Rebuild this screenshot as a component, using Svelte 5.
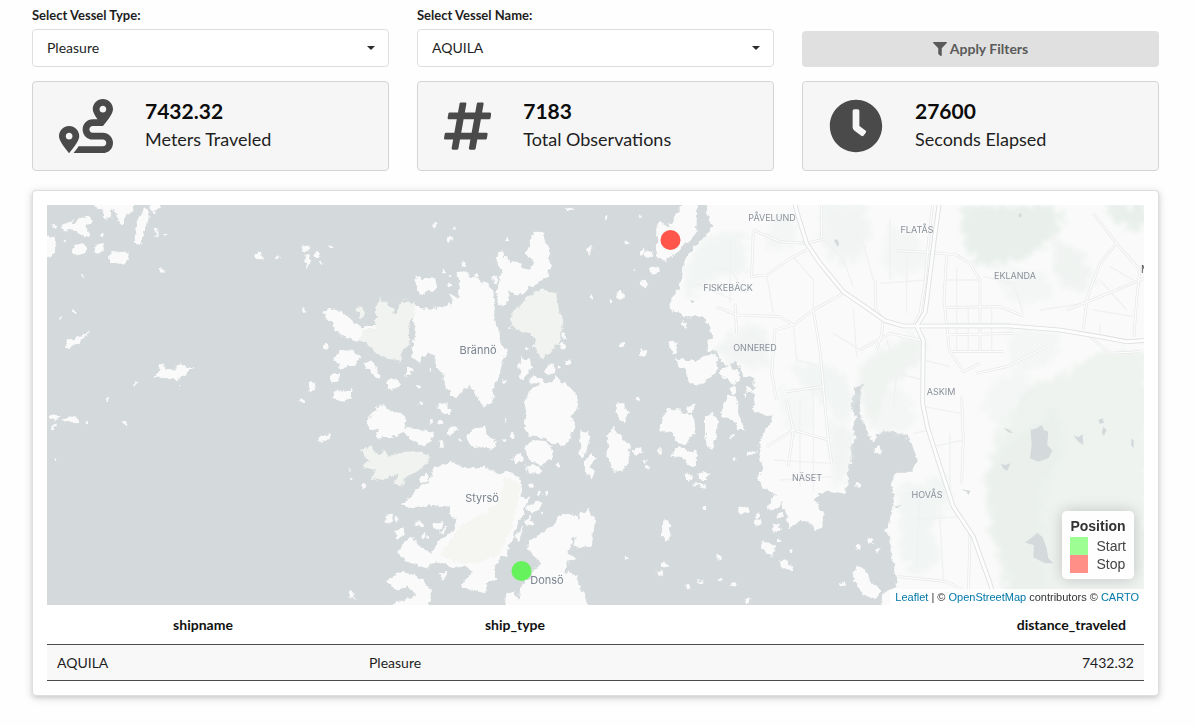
<script>
  const vesselTypes = ['Pleasure', 'Cargo', 'Tanker', 'Tug', 'Fishing'];
  const vesselNames = ['AQUILA', 'BALTICO', 'VICTORIA'];
  let vesselType = $state('Pleasure');
  let vesselName = $state('AQUILA');

  const stats = [
    {
      value: '7432.32',
      label: 'Meters Traveled',
      width: 512,
      path: 'M416 320h-96c-17.600 0-32-14.400-32-32s14.400-32 32-32h96s96-107 96-160-43-96-96-96-96 43-96 96c0 25.500 22.200 63.400 45.300 96H320c-52.900 0-96 43.100-96 96s43.100 96 96 96h96c17.600 0 32 14.400 32 32s-14.400 32-32 32H185.500c-16 24.800-33.800 47.700-47.300 64H416c52.900 0 96-43.100 96-96s-43.100-96-96-96zm0-256c17.700 0 32 14.300 32 32s-14.300 32-32 32-32-14.300-32-32 14.300-32 32-32zM96 256c-53 0-96 43-96 96s96 160 96 160 96-107 96-160-43-96-96-96zm0 128c-17.700 0-32-14.300-32-32s14.300-32 32-32 32 14.300 32 32-14.300 32-32 32z'
    },
    {
      value: '7183',
      label: 'Total Observations',
      width: 448,
      path: 'M440.667 182.109l7.143-40c1.313-7.355-4.342-14.109-11.813-14.109h-74.810l14.623-81.891C377.123 38.754 371.468 32 363.997 32h-40.632a12 12 0 0 0-11.813 9.891L296.175 128H197.540l14.623-81.891C213.477 38.754 207.822 32 200.350 32h-40.632a12 12 0 0 0-11.813 9.891L132.528 128H53.432a12 12 0 0 0-11.813 9.891l-7.143 40C33.163 185.246 38.818 192 46.289 192h74.810L98.242 320H19.146a12 12 0 0 0-11.813 9.891l-7.143 40C-1.123 377.246 4.532 384 12.003 384h74.810L72.190 465.891C70.877 473.246 76.532 480 84.003 480h40.632a12 12 0 0 0 11.813-9.891L151.826 384h98.634l-14.623 81.891C234.523 473.246 240.178 480 247.650 480h40.632a12 12 0 0 0 11.813-9.891L315.472 384h79.096a12 12 0 0 0 11.813-9.891l7.143-40c1.313-7.355-4.342-14.109-11.813-14.109h-74.810l22.857-128h79.096a12 12 0 0 0 11.813-9.891zM261.889 320h-98.634l22.857-128h98.634l-22.857 128z'
    },
    {
      value: '27600',
      label: 'Seconds Elapsed',
      width: 512,
      path: 'M256 8C119 8 8 119 8 256s111 248 248 248 248-111 248-248S393 8 256 8zm92.490 313l-20 25a16 16 0 0 1-22.490 2.500l-67-49.720a40 40 0 0 1-15-31.230V112a16 16 0 0 1 16-16h32a16 16 0 0 1 16 16V256l58 42.500A16 16 0 0 1 348.490 321z'
    }
  ];

  const rows = [{ shipname: 'AQUILA', ship_type: 'Pleasure', distance_traveled: '7432.32' }];

  // Each sheet holds shapes at three units per map pixel, from its own origin.
  const sheets = [
    {
      x: 30,
      y: 185,
      shapes: [
        '190,40 195,65 215,72 225,102 248,95 240,78 258,76 268,115 278,120 285,92 310,78 315,40',
        '360,40 362,70 372,85 388,65 390,40',
        '90,128 105,110 130,105 132,118 150,98 178,95 182,115 165,120 178,150 160,156 140,138 110,136',
        '342,70 358,82 352,120 340,145 338,175 322,183 311,170 316,145 325,100',
        '374,122 382,128 383,155 375,155',
        '40,155 72,155 78,165 75,195 62,215 40,218',
        '125,188 148,173 170,190 165,205 130,208',
        '190,200 200,180 215,178 222,200 205,206',
        '240,198 292,202 294,234 242,238',
        '388,248 400,252 405,260 395,266 386,260',
        '670,212 685,198 700,220 680,226',
        '102,486 115,465 150,455 180,438 165,460 140,478 118,486',
        '368,578 385,562 385,540 408,535 405,552 430,560 450,532 462,548 495,545 470,565 450,580 420,585 395,572',
        '312,590 326,594 315,603', '60,690 88,690 85,700 60,706', '98,700 120,693 142,698 138,711 102,712',
        '60,728 75,715 82,722 64,738', '862,770 875,752 898,745 900,762', '880,378 900,370 915,390 900,405 885,398'
      ],
      dots: [[72,126,5],[215,148,5],[406,150,3],[104,172,4],[155,276,4],[744,220,5],[826,188,5],[833,216,7],[832,242,5],[860,212,6],[874,232,4],[135,382,5],[88,398,4],[824,378,5],[234,645,5],[284,711,6],[168,713,4],[845,608,8],[816,645,6],[445,602,4],[78,825,4],[887,485,5]]
    },
    {
      x: 300,
      y: 200,
      shapes: [
        '470,222 485,214 505,222 530,240 565,252 580,275 585,305 583,350 598,395 604,430 625,455 608,485 600,520 588,545 578,585 555,618 540,600 525,580 510,560 490,568 478,592 450,578 432,552 430,520 412,510 400,465 380,458 365,485 345,484 334,472 340,420 345,385 340,340 345,315 372,325 390,333 415,320 440,322 455,300 445,285 475,290 480,265',
        '347,228 365,240 380,235 405,235 412,260 395,275 380,272 370,285 348,272',
        '595,155 610,155 625,185 660,190 670,205 690,210 700,190 680,160 690,120 705,98 730,98 740,135 752,155 745,175 755,200 745,225 720,240 705,262 685,255 665,288 630,275 622,300 610,318 594,315 592,270 605,215 590,185',
        '655,500 665,470 690,480 694,505 670,540 660,525',
        '685,540 705,530 730,540 728,552 695,550',
        '680,600 705,575 745,578 765,525 785,545 810,565 830,590 828,630 800,650 680,640 675,615',
        '70,335 95,325 125,340 150,355 165,370 188,385 228,375 228,388 195,390 175,425 145,415 120,405 105,385 95,360',
        '100,475 120,450 160,452 185,475 160,495 125,508', '190,485 215,485 240,520 235,542 210,520',
        '315,525 325,500 345,508 330,528', '95,595 115,565 135,575 160,560 150,595 130,605',
        '410,612 440,610 455,635 425,640', '735,515 755,490 768,510 755,528',
        '795,28 815,22 822,28 802,34', '858,144 876,142 868,165', '480,188 495,186 498,198 485,200',
        '580,230 593,225 593,250 582,248', '630,380 625,390 640,385', '225,625 240,615 275,640 225,640'
      ],
      dots: [[403,77,7],[448,116,8],[461,85,4],[624,118,5],[528,229,6],[448,252,6],[18,145,7],[24,183,9],[50,168,6],[90,137,4],[430,212,5],[450,230,4],[682,445,7],[705,438,5],[792,410,6],[785,437,10],[875,292,5],[35,555,10],[105,535,14],[280,550,18],[270,325,8],[80,440,8],[355,560,5],[615,545,5],[805,488,6],[780,500,5],[390,510,5],[8,600,6],[362,612,5]]
    },
    {
      x: 340,
      y: 390,
      shapes: [
        '80,90 105,60 128,45 145,60 185,70 200,90 190,110 240,115 275,130 275,150 245,168 210,145 190,125 160,140 130,145 110,140 115,120 85,115',
        '378,140 400,115 432,112 450,145 470,150 455,180 430,168 400,175',
        '290,40 310,38 335,60 330,78 312,75', '315,130 330,108 352,105 350,120 328,138',
        '400,-15 430,0 465,15 455,35 430,50 420,25', '330,-5 365,0 350,20',
        '555,30 575,0 600,-20 680,-20 715,20 708,60 690,80 705,100 700,125 670,168 640,160 600,140 570,140 552,115 560,75',
        '555,175 570,155 600,150 638,170 634,205 605,225 565,210',
        '515,205 545,190 550,215 525,215', '555,230 575,220 608,235 600,252 570,250',
        '180,345 215,320 235,295 265,275 285,230 330,215 375,235 430,230 480,250 500,240 545,270 545,320 570,325 555,350 550,375 530,400 525,445 505,465 500,500 480,505 465,535 465,570 440,580 435,610 400,600 360,590 375,570 400,545 380,530 330,530 300,515 275,520 260,535 200,515 175,490 185,465 215,440 235,465 270,490 295,460 340,415 350,390 330,370 330,350 280,345 220,355',
        '565,455 600,435 640,405 665,375 700,370 720,395 745,355 765,385 755,465 725,470 700,440 685,490 710,510 680,515 670,545 690,545 710,560 730,610 745,665 490,665 500,610 520,600 535,630 545,580 575,560 600,520 570,490',
        '135,575 180,545 225,555 270,590 275,630 250,665 140,665 160,640 205,625 230,610 200,590 170,600',
        '560,350 600,330 605,345 575,370', '555,390 570,380 578,400 565,415', '530,440 545,405 547,420 535,455',
        '720,175 732,125 748,125 745,165 730,205 718,195', '735,220 750,195 765,200 745,240 765,260 735,250',
        '825,45 850,55 860,85 845,95 830,70', '803,135 820,115 850,150 870,165 868,205 850,240 825,245 805,205',
        '165,420 190,415 195,430 175,450', '225,395 245,390 248,408 228,408', '280,400 305,392 310,410 285,420',
        '295,550 325,545 310,572', '300,425 325,405 310,435', '240,265 262,250 265,270 245,282', '135,400 140,380 160,372 155,400'
      ],
      dots: [[300,98,7],[270,95,6],[240,40,5],[304,165,7],[362,150,4],[515,138,6],[495,150,4],[496,88,3],[572,285,7],[620,313,5],[35,265,5],[28,240,4],[72,288,6],[35,612,9],[45,624,4],[170,385,6],[855,508,4],[653,228,5],[600,310,6],[250,437,6],[265,442,4],[605,370,4]]
    },
    {
      x: 580,
      y: 200,
      shapes: [
        '380,-10 378,50 397,75 388,98 365,118 345,140 325,165 312,195 305,240 295,270 280,290 270,310 275,332 300,340 312,355 350,345 378,358 392,385 385,395 400,412 382,425 384,450 410,455 425,485 440,498 470,485 490,528 522,530 524,560 532,600 515,625 525,638 560,645 580,640 575,665 560,690 540,720 538,780 552,810 530,835 548,865 570,872 585,882 560,925 575,935 597,925 605,905 625,970 625,985 660,962 690,965 708,992 728,980 728,935 705,900 718,880 750,872 795,882 806,850 800,830 810,790 815,740 830,715 818,680 830,650 812,618 828,560 850,550 838,610 845,660 862,700 880,725 898,698 940,692 980,710 1005,750 1010,785 995,815 950,815 935,840 942,910 925,980 915,985 930,1010 935,1070 950,1130 955,1160 915,1175 900,1230 1720,1230 1720,-10',
        '290,45 310,10 350,-10 352,60 345,100 310,140 280,170 250,180 228,165 232,120 228,95 240,65 260,80',
        '265,425 292,425 288,460 275,460', '290,475 315,480 350,480 385,462 410,470 415,505 395,530 350,558 325,540 315,510 295,495',
        '418,515 445,495 475,515 480,540 460,558 440,540', '205,205 240,200 240,215 215,225', '305,360 325,380 318,388 305,375',
        '108,275 128,272 132,290 118,300', '18,145 35,145 27,165', '110,610 128,610 150,640 110,640', '250,640 290,625 310,640', '440,620 455,590 472,600 475,640'
      ],
      dots: [[188,155,8],[206,165,11],[141,130,7],[190,250,9],[128,433,8],[90,305,4],[36,293,4],[190,460,9],[80,53,5],[178,48,4],[458,570,7],[505,570,8],[520,575,6],[345,90,5],[495,588,4],[172,596,4],[160,212,3]]
    },
    {
      x: 580,
      y: 390,
      shapes: [
        '105,38 125,48 142,78 132,95 115,80', '85,150 98,112 118,140 145,160 150,205 125,245 95,235 82,205',
        '235,115 260,55 300,70 340,75 348,130 325,150 318,165 295,160 275,125 255,130',
        '275,200 290,168 330,185 352,185 350,225 330,235 305,205', '375,75 402,65 412,85 408,125 400,180 382,175 375,135',
        '420,65 445,20 465,18 475,40 475,75 495,120 475,120 465,95 435,85', '155,180 170,172 190,185 170,195',
        '315,255 325,245 338,255 330,272 315,268', '355,255 370,240 388,250 380,270 360,270', '335,290 355,275 380,290 380,298 350,285',
        '250,395 265,390 275,435 255,455 245,430', '470,355 500,350 510,365 480,375', '540,465 555,450 585,470 580,495 560,490',
        '595,515 620,510 640,528 635,545 605,530', '818,565 830,528 855,535 875,575 900,600 885,625 850,615 835,590',
        '228,540 250,548 245,560', '245,520 260,515 268,528 252,534', '0,365 28,365 45,395 35,470 -20,470',
        '500,195 515,178 528,185 512,195', '575,400 600,405 602,420 582,425', '320,50 348,38 345,60 325,68', '510,-5 520,25', '520,0 525,60 550,72 575,65 570,0',
        '1,120 25,125 20,170 5,205 0,200', '15,215 30,195 45,200 25,235 45,245 38,262 15,250'
      ],
      dots: [[172,25,4],[240,185,6],[195,213,5],[204,233,6],[455,140,4],[462,208,4],[460,582,7],[415,500,6],[325,588,6],[362,577,5],[420,570,5],[137,508,4],[530,378,7],[533,400,8],[598,375,8],[595,450,6],[635,487,5],[833,474,6],[873,455,9],[893,182,9],[833,285,7],[790,580,6],[503,633,6],[460,5,6],[895,480,5],[375,355,7]]
    }
  ];

  // Parks and woods, on the sheet that starts at 580,200.
  const greens = [
    { d: '1150,15 1250,20 1420,15 1450,60 1410,120 1340,170 1250,200 1200,190 1150,130', o: 0.9 },
    { d: '1580,10 1700,10 1700,75 1640,85 1600,60', o: 0.9 },
    { d: '1420,120 1500,150 1540,250 1500,280 1450,260 1420,200', o: 0.5 },
    { d: '1250,700 1300,640 1330,570 1450,520 1560,460 1700,450 1700,1225 1290,1225 1280,1100 1230,1000 1220,860', o: 0.6 },
    { d: '1290,720 1440,620 1450,780 1390,880 1400,1225 1290,1225 1240,1020 1210,830', o: 0.5 },
    { d: '840,490 920,440 1000,400 1050,430 1010,500 950,540 900,600 890,690 855,660 845,590', o: 0.5 },
    { d: '730,10 850,10 870,100 830,190 740,170 725,90', o: 0.45 },
    { d: '390,110 490,90 500,210 420,230 340,280 310,290 320,220 350,150', o: 0.4 },
    { d: '400,440 510,370 560,400 570,500 500,500 430,470', o: 0.45 },
    { d: '640,500 740,490 800,540 830,600 790,680 750,620 680,580', o: 0.4 },
    { d: '960,860 1100,830 1110,900 1050,990 1080,1080 1000,1130 960,1050', o: 0.4 },
    { d: '930,80 1010,90 1040,200 950,230 900,180', o: 0.3 },
    { d: '740,650 820,700 800,840 760,860', o: 0.45 },
    { d: '1290,390 1440,400 1430,470 1330,520 1290,490', o: 0.35 },
    { d: '880,600 960,560 1010,640 980,700 900,690', o: 0.35 },
    { d: '1240,540 1330,520 1380,600 1260,680 1200,620', o: 0.3 },
    { d: '590,40 640,60 650,120 580,160 550,110', o: 0.3 },
    { d: '600,560 690,590 700,680 620,700', o: 0.25 },
    { d: '1240,220 1390,210 1430,300 1300,310', o: 0.3 }
  ];

  const lakes = [
    '1352,690 1370,685 1385,675 1392,690 1405,695 1402,735 1418,752 1405,775 1375,785 1350,775 1355,735',
    '1358,1010 1372,998 1388,1012 1400,1045 1405,1075 1420,1090 1395,1090 1360,1072 1362,1035 1335,1028',
    '1270,685 1285,688 1300,698 1288,698', '1262,792 1275,795 1292,790 1282,812 1272,808',
    '1480,705 1495,712 1508,702 1510,735 1495,725', '1555,660 1568,655 1572,668 1560,672', '1655,715 1662,722 1660,745 1653,735',
    '1143,868 1172,872 1165,885 1160,875', '762,120 772,118 778,132 772,140', '1315,42 1325,40 1325,52 1318,52',
    '942,920 965,915 950,925', '330,300 345,304 336,310', '1570,680 1580,690 1572,708 1565,700'
  ];

  const motorways = [
    'M640 -5L655 50L680 130L720 190L790 275L870 330L915 362L970 378H1070L1290 378L1440 390L1560 410L1640 425L1720 420',
    'M1080 -5L1064 110L1058 160L1036 335L1010 378L1030 420L1028 610L1042 680L1080 800L1120 920L1180 1010L1230 1150L1250 1220'
  ];
  const roads = [
    'M1060 -5L1045 130L1035 250L1020 340L1000 378', 'M950 152L1060 158L1130 165L1170 190L1200 240V455', 'M1100 160L1092 300L1108 450L1150 515L1200 490',
    'M1100 322L1260 320L1330 348', 'M1115 455H1270', 'M1510 390L1522 290L1560 190L1610 130L1680 210L1670 300L1662 410', 'M1610 130L1540 40', 'M1692 235L1610 270L1510 310L1460 330',
    'M520 90L600 125L680 130L730 118', 'M520 90L515 230L560 225L640 170L680 150', 'M470 345L600 350L640 375L700 330L790 280', 'M465 310L470 400',
    'M590 600L575 520L585 390L640 375', 'M700 330L720 450L730 560L620 575', 'M730 560L745 720L755 790', 'M725 15V110', 'M885 240L888 330L910 360L905 400L890 450',
    'M840 450L930 400L1020 420', 'M1145 590L1150 720L1145 850', 'M560 740L640 690L745 720', 'M620 600L640 690L625 800', 'M1170 1000L1165 1190', 'M955 1130L1100 1145L1190 1190',
    'M1190 520L1280 500L1400 440', 'M1100 405L1300 400', 'M1530 410L1590 460L1680 455', 'M410 320L470 345'
  ];
  const streets = [
    'M1100 240H1200', 'M1130 200V450', 'M1165 320V450', 'M1235 330V450', 'M1100 370H1290', 'M1560 240L1640 330', 'M1540 330L1660 350', 'M1590 200L1660 240', 'M1560 370V400',
    'M390 200L450 210L500 280', 'M450 120V310', 'M350 250L460 300', 'M560 225L580 340', 'M640 170L700 240L700 330', 'M790 60L850 130L880 240', 'M730 118L790 180L820 260',
    'M640 375L650 480L720 500', 'M500 400L580 440', 'M660 600V860', 'M700 560V870', 'M580 780L750 790', 'M600 840L760 830', 'M920 420L950 520L940 620', 'M950 520L1030 540', 'M1030 480L1110 500',
    'M1030 620L1145 640', 'M1060 740L1150 720', 'M1000 700L1050 690', 'M970 880L1100 880', 'M1000 960L1140 950', 'M1020 880L1010 1100', 'M1080 960L1090 1140', 'M1110 700V880',
    'M900 250L1040 240', 'M930 60V240', 'M980 160V340', 'M1210 230L1300 250L1330 340', 'M1380 330L1510 310', 'M820 330L830 470', 'M760 400L840 450'
  ];

  const places = [
    { name: 'PÅVELUND', x: 772, y: 221 }, { name: 'FLATÅS', x: 917, y: 233 }, { name: 'EKLANDA', x: 1015, y: 279 },
    { name: 'FISKEBÄCK', x: 728, y: 291 }, { name: 'ONNERED', x: 755, y: 351 }, { name: 'ASKIM', x: 941, y: 395 },
    { name: 'NÄSET', x: 807, y: 481 }, { name: 'HOVÅS', x: 927, y: 498 }
  ];
  const islands = [
    { name: 'Brännö', x: 478, y: 354 }, { name: 'Styrsö', x: 482, y: 502 }, { name: 'Donsö', x: 547, y: 584 }
  ];
</script>

<main>
  <form class="grid" onsubmit={(e) => e.preventDefault()}>
    <div class="field">
      <label for="vessel-type">Select Vessel Type:</label>
      <div class="dropdown">
        <select id="vessel-type" bind:value={vesselType}>
          {#each vesselTypes as t}<option>{t}</option>{/each}
        </select>
        <svg class="caret" viewBox="0 0 8 4" aria-hidden="true"><path d="M0 0h8L4 4z" /></svg>
      </div>
    </div>
    <div class="field">
      <label for="vessel-name">Select Vessel Name:</label>
      <div class="dropdown">
        <select id="vessel-name" bind:value={vesselName}>
          {#each vesselNames as n}<option>{n}</option>{/each}
        </select>
        <svg class="caret" viewBox="0 0 8 4" aria-hidden="true"><path d="M0 0h8L4 4z" /></svg>
      </div>
    </div>
    <button type="submit">
      <svg viewBox="0 0 512 512" aria-hidden="true"><path d="M488 0H24C3 0-8 26 7 41l185 185v206c0 8 4 15 10 20l80 56c16 11 38 0 38-20V226L505 41c15-15 4-41-17-41z" /></svg>
      Apply Filters
    </button>
  </form>

  <section class="grid stats">
    {#each stats as s}
      <div class="stat">
        <svg viewBox="0 0 {s.width} 512" aria-hidden="true"><path d={s.path} /></svg>
        <div class="figures">
          <strong>{s.value}</strong>
          <span>{s.label}</span>
        </div>
      </div>
    {/each}
  </section>

  <section class="panel">
    <div class="map">
      <svg class="tiles" viewBox="47 205 1097 400" preserveAspectRatio="xMidYMid slice" role="img" aria-label="Vessel route map">
        <defs>
          <filter id="coast" x="-5%" y="-5%" width="110%" height="110%">
            <feTurbulence type="fractalNoise" baseFrequency="0.16" numOctaves="3" seed="4" />
            <feDisplacementMap in="SourceGraphic" scale="7" xChannelSelector="R" yChannelSelector="G" />
          </filter>
          <filter id="woods" x="-5%" y="-5%" width="110%" height="110%">
            <feTurbulence type="fractalNoise" baseFrequency="0.05" numOctaves="3" seed="9" />
            <feDisplacementMap in="SourceGraphic" scale="70" xChannelSelector="R" yChannelSelector="G" />
            <feGaussianBlur stdDeviation="7" />
          </filter>
        </defs>
        <g class="land" filter="url(#coast)">
          {#each sheets as sheet}
            <g transform="translate({sheet.x} {sheet.y}) scale(0.3333)">
              {#each sheet.shapes as points}<polygon {points} />{/each}
              {#each sheet.dots as [cx, cy, r]}<ellipse {cx} {cy} rx={r} ry={r + 1} />{/each}
            </g>
          {/each}
          <g class="wood" transform="translate(300 200) scale(0.3333)">
            <polygon points="228,330 240,295 262,310 285,345 300,310 320,298 345,310 342,345 325,380 332,420 310,450 300,485 265,480 225,460 200,430 175,420 195,390 228,388" />
            <polygon points="630,345 665,310 690,285 725,268 770,280 775,320 790,360 785,400 765,445 725,475 705,440 695,400 665,395 635,375" />
            <polygon points="165,325 190,320 200,345 185,355" />
          </g>
          <g class="wood" transform="translate(340 390) scale(0.3333)">
            <polygon points="60,180 90,172 115,195 130,180 150,200 175,190 240,185 270,200 255,225 210,255 180,290 162,280 175,250 120,270 90,268 110,240 65,230 85,210" />
          </g>
          <g class="grass" transform="translate(340 390) scale(0.3333)">
            <polygon points="490,260 540,280 535,330 520,400 480,490 420,520 330,515 300,490 370,400 440,370 480,330" />
          </g>
        </g>
        <g transform="translate(580 200) scale(0.3333)">
          <g class="woods" filter="url(#woods)">
            {#each greens as g}<polygon points={g.d} opacity={g.o} />{/each}
          </g>
          {#each lakes as points}<polygon class="lake" {points} />{/each}
          {#each streets as d}<path class="street" {d} />{/each}
          {#each roads as d}<path class="casing minor" {d} />{/each}
          {#each roads as d}<path class="road minor" {d} />{/each}
          {#each motorways as d}<path class="casing major" {d} />{/each}
          {#each motorways as d}<path class="road major" {d} />{/each}
        </g>
        {#each places as p}<text class="place" x={p.x} y={p.y}>{p.name}</text>{/each}
        {#each islands as p}<text class="island" x={p.x} y={p.y}>{p.name}</text>{/each}
        <text class="city" x="1141" y="273">M</text>
        <circle class="stop" cx="670.500" cy="240" r="10" />
        <circle class="start" cx="521.500" cy="571" r="10" />
      </svg>
      <div class="legend">
        <strong>Position</strong>
        <div><i class="start-swatch"></i>Start</div>
        <div><i class="stop-swatch"></i>Stop</div>
      </div>
      <div class="attribution">
        <a href="#leaflet">Leaflet</a> | © <a href="#osm">OpenStreetMap</a> contributors © <a href="#carto">CARTO</a>
      </div>
    </div>
    <table>
      <thead>
        <tr><th>shipname</th><th>ship_type</th><th class="num">distance_traveled</th></tr>
      </thead>
      <tbody>
        {#each rows as r}
          <tr><td>{r.shipname}</td><td>{r.ship_type}</td><td class="num">{r.distance_traveled}</td></tr>
        {/each}
      </tbody>
    </table>
  </section>
</main>

<style>
  :global(body) {
    margin: 0;
    background: #fefefe;
  }
  main {
    box-sizing: border-box;
    padding: 6px 37px 30px 32px;
    font-family: Lato, sans-serif;
    font-size: 14px;
    line-height: 20px;
    color: #1e1e1e;
  }
  .grid {
    display: grid;
    grid-template-columns: repeat(3, 1fr);
    gap: 28px;
    align-items: end;
  }
  .field {
    display: flex;
    flex-direction: column;
    gap: 4px;
  }
  label {
    font-size: 13px;
    font-weight: 700;
    line-height: 19px;
  }
  .dropdown {
    display: grid;
    align-items: center;
  }
  select,
  .caret {
    grid-area: 1 / 1;
  }
  select {
    appearance: none;
    width: 100%;
    height: 38px;
    padding: 0 14px;
    border: 1px solid #dededf;
    border-radius: 4px;
    background: #fff;
    color: #1e1e1e;
    font: inherit;
  }
  .caret {
    justify-self: end;
    width: 8px;
    height: 4px;
    margin-right: 14px;
    fill: #2b2b2b;
    pointer-events: none;
  }
  button {
    display: flex;
    align-items: center;
    justify-content: center;
    gap: 3px;
    height: 36px;
    padding: 0;
    border: 0;
    border-radius: 4px;
    background: #e0e0e0;
    color: #5a5a5a;
    font: inherit;
    font-weight: 700;
  }
  button svg {
    width: 14px;
    height: 14px;
    fill: currentColor;
  }
  .stats {
    margin-top: 14px;
  }
  .stat {
    display: flex;
    align-items: center;
    gap: 32px;
    box-sizing: border-box;
    height: 90px;
    padding: 0 26px;
    border: 1px solid #d4d4d5;
    border-radius: 4px;
    background: #f6f6f6;
  }
  .stat svg {
    height: 54px;
    fill: #4a4a4a;
  }
  .figures {
    padding-bottom: 2px;
  }
  .stat strong,
  .stat span {
    display: block;
    line-height: 29px;
  }
  .stat strong {
    font-size: 21px;
    color: #0c0c0c;
  }
  .stat span {
    font-size: 18px;
  }
  .panel {
    margin-top: 19px;
    padding: 14px;
    border: 1px solid #dededf;
    border-radius: 4px;
    background: #fff;
    box-shadow: 0 2px 4px rgba(34, 36, 38, 0.12), 0 2px 10px rgba(34, 36, 38, 0.15);
  }
  .map {
    position: relative;
    height: 400px;
    overflow: hidden;
    background: #d4d9db;
  }
  .tiles {
    display: block;
    width: 100%;
    height: 100%;
  }
  .land {
    fill: #f9faf9;
  }
  .wood {
    fill: #f0f3f0;
  }
  .grass {
    fill: #f5f6f2;
  }
  .woods {
    fill: #e7eeea;
  }
  .lake {
    fill: #d4d9db;
  }
  .casing,
  .road,
  .street {
    fill: none;
    stroke-linejoin: round;
  }
  .street {
    stroke: #f0f1f2;
    stroke-width: 4;
  }
  .casing {
    stroke: #e6e7e8;
  }
  .road {
    stroke: #fdfdfd;
  }
  .casing.minor {
    stroke-width: 8;
  }
  .road.minor {
    stroke-width: 4;
  }
  .casing.major {
    stroke: #dcdee0;
    stroke-width: 14;
  }
  .road.major {
    stroke-width: 9;
  }
  text {
    font-family: Inter, sans-serif;
    text-anchor: middle;
  }
  .place {
    font-size: 9px;
    fill: #8b909b;
  }
  .island {
    font-size: 11px;
    fill: #7b8490;
  }
  .city {
    font-size: 10px;
    text-anchor: start;
    fill: #555;
  }
  .stop {
    fill: #ff554b;
  }
  .start {
    fill: #66f25c;
  }
  .legend {
    position: absolute;
    right: 10px;
    bottom: 26px;
    padding: 6px 8px;
    border-radius: 5px;
    background: rgba(255, 255, 255, 0.92);
    box-shadow: 0 0 15px rgba(0, 0, 0, 0.2);
    color: #444;
    font: 14px/18px "Liberation Sans", Arial, sans-serif;
  }
  .legend strong {
    display: block;
    margin-bottom: 2px;
    color: #333;
  }
  .legend div {
    display: flex;
    gap: 8px;
  }
  .legend i {
    width: 18px;
    height: 18px;
  }
  .start-swatch {
    background: #9dff93;
  }
  .stop-swatch {
    background: #ff8f87;
  }
  .attribution {
    position: absolute;
    right: 0;
    bottom: 0;
    padding: 0 5px;
    background: rgba(255, 255, 255, 0.8);
    color: #333;
    font: 11px/16px "Liberation Sans", Arial, sans-serif;
  }
  .attribution a {
    color: #0078a8;
    text-decoration: none;
  }
  table {
    width: 100%;
    border-collapse: collapse;
    table-layout: fixed;
    border-bottom: 1px solid #4c4c4c;
  }
  th {
    padding: 10px 18px 9px;
    border-bottom: 1px solid #4c4c4c;
    text-align: center;
    color: #111;
  }
  th:first-child,
  th:nth-child(2) {
    width: 312px;
    box-sizing: border-box;
  }
  td {
    padding: 8px 10px 7px;
    background: #f8f8f8;
  }
  th.num,
  td.num {
    text-align: right;
  }
</style>
